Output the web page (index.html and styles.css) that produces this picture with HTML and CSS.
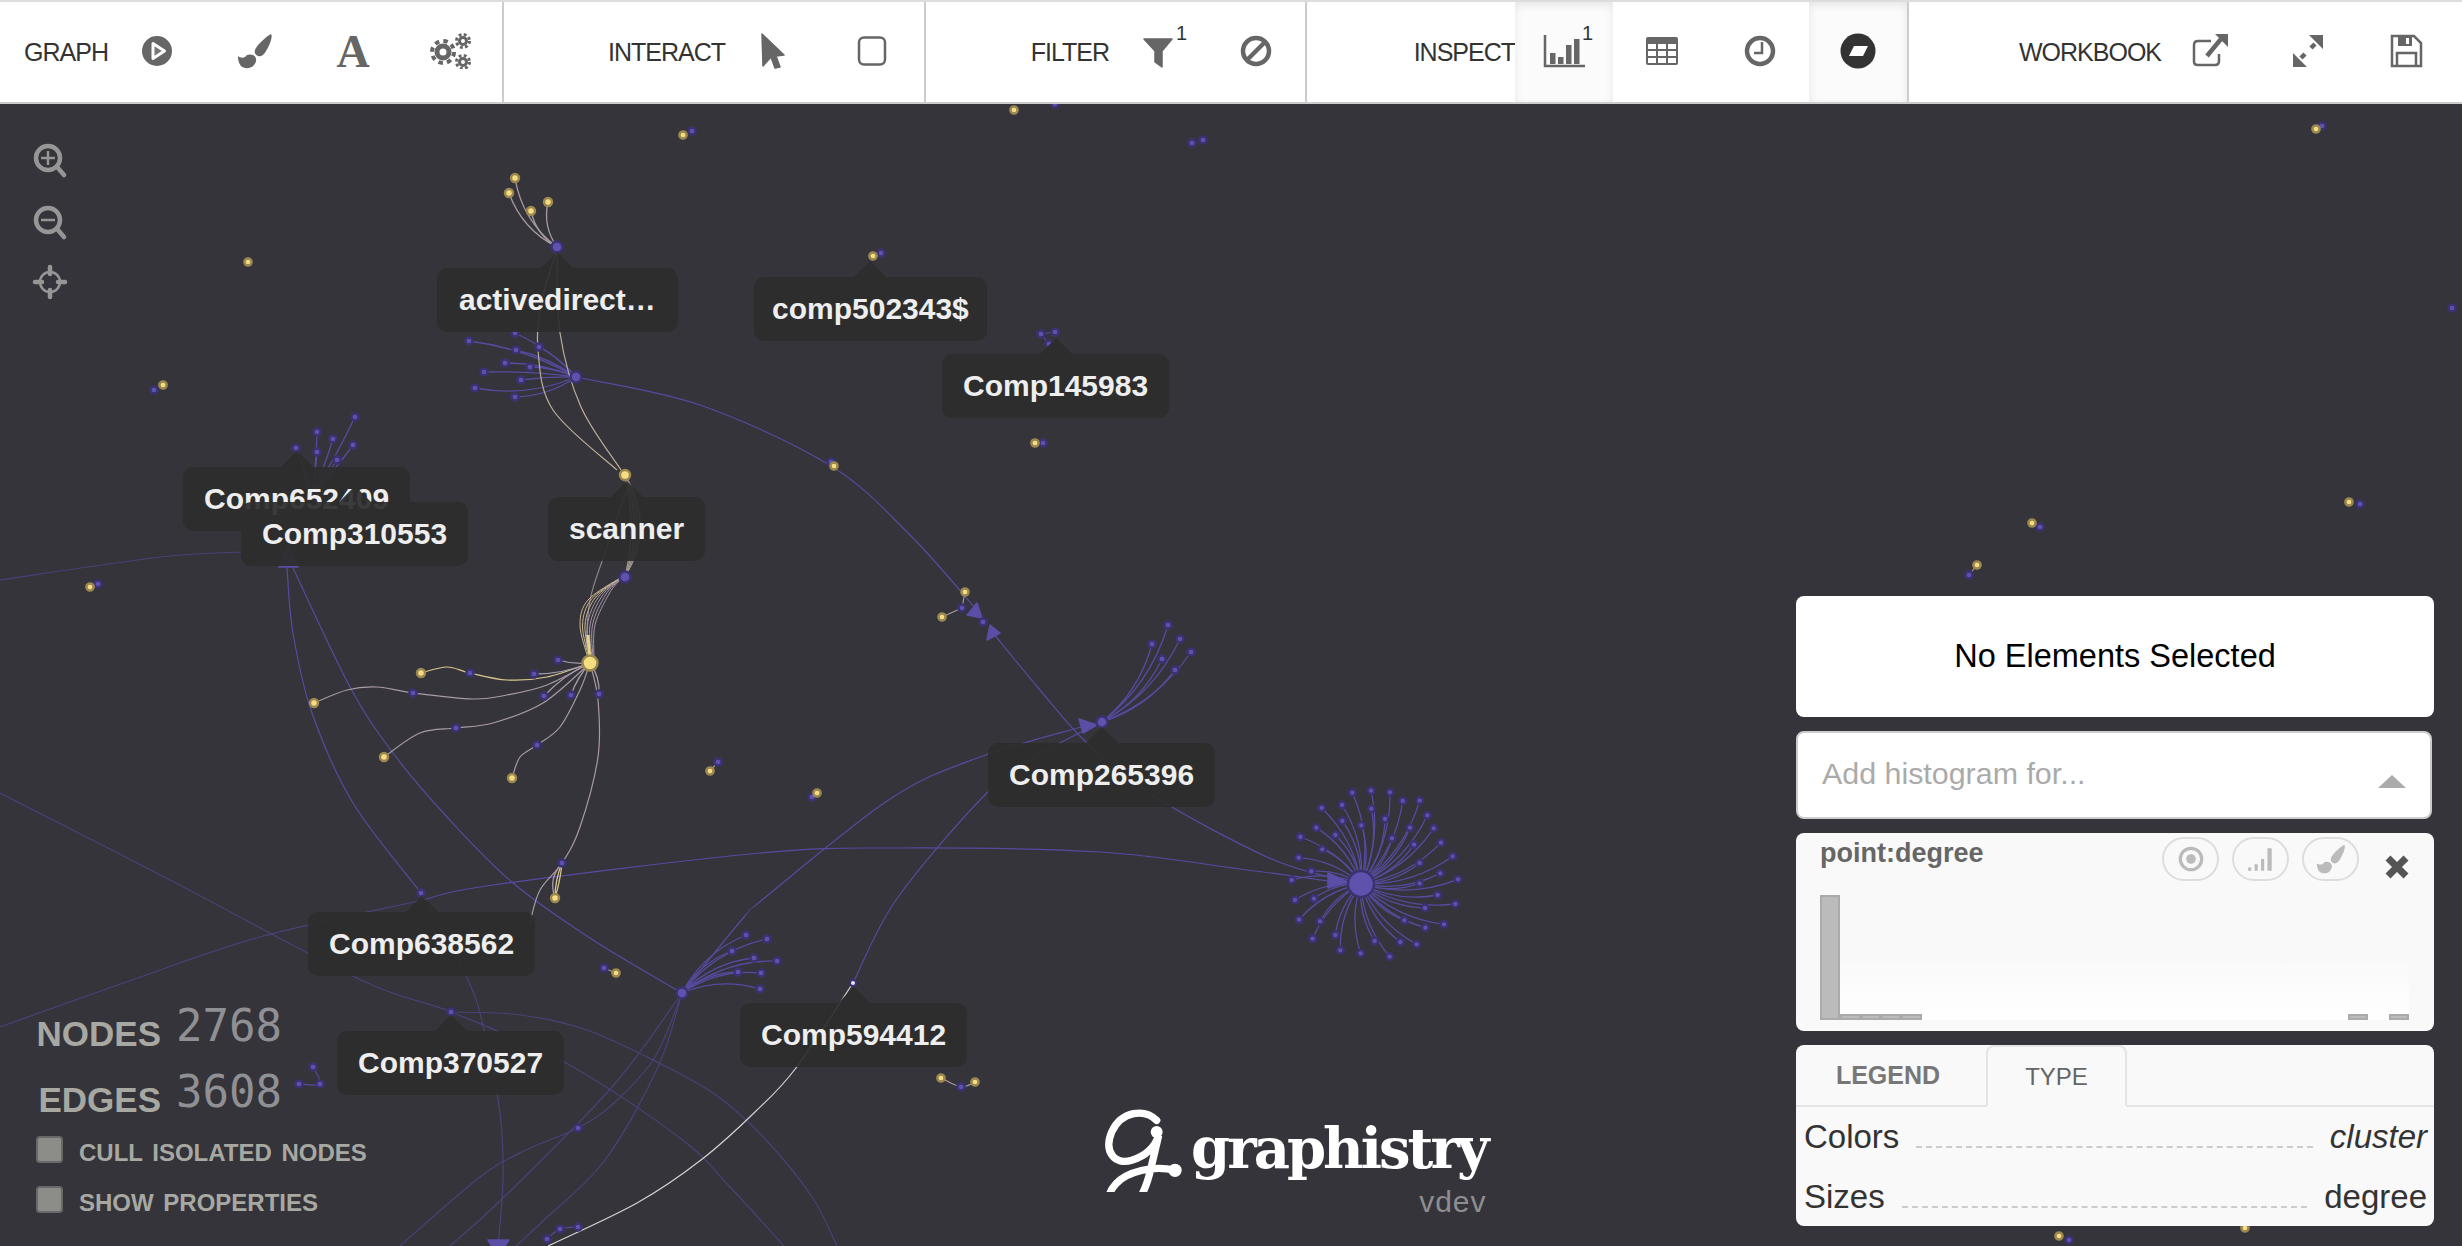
FILE: index.html
```html
<!DOCTYPE html>
<html lang="en">
<head>
    <meta charset="UTF-8">
    <title>Graphistry</title>
    <link rel="stylesheet" href="styles.css">
</head>
<body>
<div class="app">
    <div class="toolbar">
        <div class="group group-graph">
            <span class="group-label">GRAPH</span>
            <div class="btn"><svg class="icon" viewBox="0 0 36 36"><circle cx="18" cy="18" r="15"/><path class="cut" d="M14 10.500 L25.500 18 L14 25.500 Z"/></svg></div>
            <div class="btn"><svg class="icon" viewBox="0 0 36 36"><path d="M34 1 C36 3 33 12 29 18 C27 22 24 24 21 23 C17 21 17 18 19 15 C22 10 30 3 34 1 Z"/><path d="M16 22 C20 24 20 29 17 32 C14 36 7 36 4 33 C1 29 1 25 1 23 C3 25 6 25 8 24 C10 21 13 21 16 22 Z"/></svg></div>
            <div class="btn"><span class="font-icon">A</span></div>
            <div class="btn"><svg class="icon icon-gears" viewBox="0 0 50 36"><g class="gear-line"><circle cx="17" cy="19" r="6" stroke-width="5"/><circle cx="17" cy="19" r="11" stroke-width="4" stroke-dasharray="4.500 4.140"/><circle cx="37" cy="8" r="3.500" stroke-width="3"/><circle cx="37" cy="8" r="6.500" stroke-width="3" stroke-dasharray="2.800 2.300"/><circle cx="37" cy="29" r="3.500" stroke-width="3"/><circle cx="37" cy="29" r="6.500" stroke-width="3" stroke-dasharray="2.800 2.300"/></g></svg></div>
        </div>
        <div class="group group-interact">
            <span class="group-label">INTERACT</span>
            <div class="btn"><svg class="icon" viewBox="0 0 36 36"><path class="rounded" d="M6 1 L28 22 L20 23 L24 34 L19 35 L15 24 L7 33 Z"/></svg></div>
            <div class="btn"><svg class="icon" viewBox="0 0 36 36"><rect class="line" x="5" y="4.500" width="26" height="27" rx="5"/></svg></div>
        </div>
        <div class="group group-filter">
            <span class="group-label">FILTER</span>
            <div class="btn"><svg class="icon" viewBox="0 0 36 36"><path class="rounded" d="M4 6 H32 L22 18 V34 L15 29 V18 Z"/></svg><span class="badge">1</span></div>
            <div class="btn"><svg class="icon" viewBox="0 0 36 36"><circle class="line thick" cx="18" cy="18" r="13"/><path class="line thick" d="M9 27 L27 9"/></svg></div>
        </div>
        <div class="group group-inspect">
            <span class="group-label">INSPECT</span>
            <div class="btn btn-active"><svg class="icon icon-wide" viewBox="0 0 42 36"><path class="line" d="M2 2 V33 H42"/><rect x="7" y="20" width="5.500" height="11"/><rect x="15" y="24" width="5.500" height="7"/><rect x="23" y="12" width="5.500" height="19"/><rect x="31" y="6" width="5.500" height="25"/></svg><span class="badge">1</span></div>
            <div class="btn"><svg class="icon" viewBox="0 0 36 36"><rect x="2" y="4" width="32" height="28" rx="2"/><path class="cut-fill" d="M4 11 H12 V16 H4 Z M14 11 H22 V16 H14 Z M24 11 H32 V16 H24 Z M4 18 H12 V23 H4 Z M14 18 H22 V23 H14 Z M24 18 H32 V23 H24 Z M4 25 H12 V30 H4 Z M14 25 H22 V30 H14 Z M24 25 H32 V30 H24 Z"/></svg></div>
            <div class="btn"><svg class="icon" viewBox="0 0 36 36"><circle class="line thick" cx="18" cy="18" r="13"/><path class="line" d="M20 9 V20 H12"/></svg></div>
            <div class="btn btn-active"><svg class="icon icon-big" viewBox="0 0 36 36"><circle class="dark" cx="18" cy="18" r="17.500"/><path class="cut-fill" d="M14 13 H28 L23 23 H9 Z"/></svg></div>
        </div>
        <div class="group group-workbook">
            <span class="group-label">WORKBOOK</span>
            <div class="btn"><svg class="icon" viewBox="0 0 36 36"><path class="line" d="M19 8 H6 Q2 8 2 12 V29 Q2 32 6 32 H23 Q27 32 27 28 V21"/><path class="line thick" d="M15 23 L29 6"/><path d="M23 1 H36 V14 Z"/></svg></div>
            <div class="btn"><svg class="icon" viewBox="0 0 36 36"><path d="M19 2 H33 V16 Z M3 34 V20 L17 34 Z"/><path class="line thick" d="M11 25 L15 21 M21 15 L25 11"/></svg></div>
            <div class="btn"><svg class="icon" viewBox="0 0 36 36"><path class="line" d="M4 3 H26 L33 10 V33 H4 Z"/><path class="line" d="M9 33 V20 H28 V33"/><path d="M10 3 H24 V13 H10 Z"/><path class="cut-fill" d="M18 5 H21 V11 H18 Z"/></svg></div>
        </div>
    </div>

    <div class="canvas">
        <svg id="graph" class="graph" viewBox="0 104 2462 1142"></svg>

        <div class="tag tag-active">activedirect…</div>
        <div class="tag tag-comp502">comp502343$</div>
        <div class="tag tag-comp145">Comp145983</div>
        <div class="tag tag-comp652">Comp652409</div>
        <div class="tag tag-comp310">Comp310553</div>
        <div class="tag tag-scanner">scanner</div>
        <div class="tag tag-comp265">Comp265396</div>
        <div class="tag tag-comp638">Comp638562</div>
        <div class="tag tag-comp370">Comp370527</div>
        <div class="tag tag-comp594">Comp594412</div>

        <div class="zoom-tools">
            <svg class="zoom-icon" viewBox="0 0 44 44"><circle cx="20" cy="20" r="12"/><path d="M30 30 L36 37"/><path class="thin" d="M20 13 V27 M13 20 H27"/></svg>
            <svg class="zoom-icon" viewBox="0 0 44 44"><circle cx="20" cy="20" r="12"/><path d="M30 30 L36 37"/><path class="thin" d="M13 20 H27"/></svg>
            <svg class="zoom-icon" viewBox="0 0 44 44"><circle class="thin" cx="22" cy="20" r="10"/><path d="M22 5 V12 M22 28 V35 M7 20 H14 M30 20 H37"/></svg>
        </div>

        <div class="stats">
            <div class="stat-row"><span class="stat-name">NODES</span><span class="stat-value">2768</span></div>
            <div class="stat-row"><span class="stat-name">EDGES</span><span class="stat-value">3608</span></div>
            <div class="check-row check-first"><span class="check-box"></span><span class="check-label">CULL ISOLATED NODES</span></div>
            <div class="check-row"><span class="check-box"></span><span class="check-label">SHOW PROPERTIES</span></div>
        </div>

        <div class="logo">
            <svg class="logo-mark" viewBox="120 60 270 270">
                <path d="M290 115 C255 80 185 85 155 150 C130 210 165 250 215 235 C255 222 285 195 296 160 L272 262 C255 335 225 388 185 388 C142 388 135 340 168 305 C200 270 280 248 345 265"/>
                <circle cx="290" cy="150" r="18"/>
                <circle cx="345" cy="265" r="20"/>
            </svg>
            <div class="logo-text">
                <span class="logo-name">graphistry</span>
                <span class="logo-version">vdev</span>
            </div>
        </div>

        <div class="side">
            <div class="panel panel-selection">No Elements Selected</div>
            <div class="panel panel-add">
                <span class="add-text">Add histogram for...</span>
                <span class="caret"></span>
            </div>
            <div class="panel panel-hist">
                <div class="hist-head">
                    <span class="hist-title">point:degree</span>
                    <div class="hist-actions">
                        <span class="pill"><svg class="pill-icon" viewBox="0 0 28 28"><circle class="ring" cx="14" cy="14" r="10"/><circle cx="14" cy="14" r="4.500"/></svg></span>
                        <span class="pill"><svg class="pill-icon" viewBox="0 0 28 28"><path d="M2 22 H5 V25 H2 Z M8 19 H11 V25 H8 Z M14 14 H17 V25 H14 Z M20 4 H24 V25 H20 Z"/></svg></span>
                        <span class="pill"><svg class="pill-icon" viewBox="0 0 36 36"><path d="M34 1 C36 3 33 12 29 18 C27 22 24 24 21 23 C17 21 17 18 19 15 C22 10 30 3 34 1 Z"/><path d="M16 22 C20 24 20 29 17 32 C14 36 7 36 4 33 C1 29 1 25 1 23 C3 25 6 25 8 24 C10 21 13 21 16 22 Z"/></svg></span>
                        <svg class="hist-close" viewBox="0 0 26 26"><path d="M4 4 L22 22 M22 4 L4 22"/></svg>
                    </div>
                </div>
                <div class="hist-chart">
                    <span class="bar bar-tall"></span>
                    <span class="bar bar-low"></span>
                    <span class="bar bar-low"></span>
                    <span class="bar bar-low"></span>
                    <span class="bar bar-low"></span>
                    <span class="bar bar-low bin-27"></span>
                    <span class="bar bar-low bin-29"></span>
                </div>
            </div>
            <div class="panel panel-legend">
                <div class="tabs">
                    <span class="tab tab-legend">LEGEND</span>
                    <span class="tab tab-type">TYPE</span>
                </div>
                <div class="legend-row"><span>Colors</span><span class="dash"></span><em>cluster</em></div>
                <div class="legend-row"><span>Sizes</span><span class="dash"></span><span>degree</span></div>
            </div>
        </div>
    </div>
</div>
<script src="graph.js"></script>
</body>
</html>
```

FILE: styles.css
```css
body {
    margin: 0;
    overflow: hidden;
    font-family: "Liberation Sans", Arial, sans-serif;
    background-color: #34343a;
}

.app {
    display: flex;
    flex-direction: column;
    height: 100vh;
}

/* toolbar */
.toolbar {
    display: flex;
    flex: none;
    box-sizing: border-box;
    height: 104px;
    background-color: #ffffff;
    border-top: 2px solid #dddddd;
    border-bottom: 2px solid #cccccc;
}

.group {
    display: flex;
    justify-content: flex-end;
    align-items: center;
    box-sizing: border-box;
    border-right: 2px solid #cccccc;
}

.group-graph {
    width: 504px;
    padding-right: 2px;
}

.group-interact {
    width: 422px;
    padding-right: 3px;
}

.group-filter {
    width: 381px;
}

.group-inspect {
    width: 602px;
}

.group-workbook {
    flex: 1;
    border-right: none;
    padding-right: 7px;
}

.group-label {
    font-size: 25px;
    letter-spacing: -1px;
    color: #333333;
}

.btn {
    position: relative;
    display: flex;
    justify-content: center;
    align-items: center;
    flex: none;
    width: 98px;
    height: 100%;
}

.btn-active {
    background-color: #fbfbfb;
    box-shadow: inset 0 3px 8px rgba(0, 0, 0, .09);
}

.icon {
    width: 36px;
    height: 36px;
    fill: #666666;
    margin-bottom: 2px;
}

.icon-gears {
    width: 50px;
}

.icon-wide {
    width: 42px;
}

.icon .cut {
    fill: #777777;
    stroke: #ffffff;
    stroke-width: 3;
    stroke-linejoin: round;
}

.icon .cut-fill {
    fill: #ffffff;
}

.icon .dark {
    fill: #333333;
}

.icon .line {
    fill: none;
    stroke: #666666;
    stroke-width: 2.5;
}

.icon .thick {
    stroke-width: 4.5;
}

.icon .rounded {
    stroke: #666666;
    stroke-width: 1.500;
    stroke-linejoin: round;
}

.gear-line {
    fill: none;
    stroke: #666666;
}

.font-icon {
    font-family: "Liberation Serif", serif;
    font-size: 46px;
    font-weight: bold;
    line-height: 36px;
    color: #666666;
}

.badge {
    position: absolute;
    left: 67px;
    top: 21px;
    font-size: 20px;
    line-height: 20px;
    color: #333333;
}

/* graph area */
.canvas {
    position: relative;
    flex: 1;
    overflow: hidden;
}

.graph {
    position: absolute;
    top: 0;
    left: 0;
    width: 2462px;
    height: 1142px;
}

.tag {
    position: absolute;
    height: 64px;
    padding: 0 21px;
    border-radius: 10px;
    background-color: rgba(45, 45, 45, .93);
    color: #eeeeee;
    font-size: 30px;
    font-weight: bold;
    line-height: 64px;
    white-space: nowrap;
}

.tag::before {
    content: "";
    position: absolute;
    left: 50%;
    top: -16px;
    margin-left: -16px;
    border-left: 16px solid transparent;
    border-right: 16px solid transparent;
    border-bottom: 16px solid rgba(45, 45, 45, .93);
}

.tag-active { left: 437px; top: 164px; padding: 0 22px; }
.tag-comp502 { left: 754px; top: 173px; padding: 0 18px; }
.tag-comp145 { left: 942px; top: 250px; }
.tag-comp652 { left: 183px; top: 363px; }
.tag-comp310 { left: 241px; top: 398px; }
.tag-scanner { left: 548px; top: 393px; }
.tag-comp265 { left: 988px; top: 639px; }
.tag-comp638 { left: 308px; top: 808px; }
.tag-comp370 { left: 337px; top: 927px; }
.tag-comp594 { left: 740px; top: 899px; }

.zoom-tools {
    position: absolute;
    left: 28px;
    top: 34px;
    display: flex;
    flex-direction: column;
    gap: 18px;
}

.zoom-icon {
    width: 44px;
    height: 44px;
    fill: none;
    stroke: #969696;
    stroke-width: 4.500;
    stroke-linecap: round;
}

.zoom-icon .thin {
    stroke-width: 2.500;
    stroke-linecap: butt;
}

/* counters */
.stats {
    position: absolute;
    left: 36px;
    top: 881px;
}

.stat-row {
    display: flex;
    align-items: flex-end;
    height: 66px;
}

.stat-name {
    width: 125px;
    font-size: 35px;
    font-weight: bold;
    line-height: 34px;
    text-align: right;
    color: #a8a8a2;
}

.stat-value {
    margin-left: 15px;
    padding-bottom: 3px;
    font-family: "DejaVu Sans Mono", monospace;
    font-size: 44px;
    line-height: 44px;
    color: #909094;
}

.check-row {
    display: flex;
    align-items: center;
    height: 27px;
    margin-top: 23px;
}

.check-first {
    margin-top: 19px;
}

.check-box {
    box-sizing: border-box;
    width: 27px;
    height: 27px;
    border: 2px solid #69696a;
    border-radius: 4px;
    background-color: #8c8c88;
}

.check-label {
    margin-left: 16px;
    padding-top: 7px;
    font-size: 24px;
    font-weight: bold;
    word-spacing: 3px;
    color: #a8a8a2;
}

/* logo */
.logo {
    position: absolute;
    left: 1100px;
    top: 998px;
    display: flex;
}

.logo-mark {
    width: 90px;
    height: 90px;
    fill: none;
    stroke: #ffffff;
    stroke-width: 22;
    stroke-linecap: round;
}

.logo-mark circle {
    fill: #ffffff;
    stroke: none;
}

.logo-text {
    display: flex;
    flex-direction: column;
    align-items: flex-end;
    margin-left: 1px;
}

.logo-name {
    margin-top: 13px;
    font-family: "DejaVu Serif", serif;
    font-size: 56px;
    font-weight: bold;
    line-height: 66px;
    letter-spacing: -3px;
    color: #ffffff;
}

.logo-version {
    margin-top: 6px;
    font-size: 30px;
    line-height: 30px;
    letter-spacing: 1px;
    color: #8e8e90;
}

/* side panels */
.side {
    position: absolute;
    left: 1796px;
    top: 492px;
    display: flex;
    flex-direction: column;
    gap: 14px;
    width: 638px;
}

.panel {
    box-sizing: border-box;
    border-radius: 8px;
    background-color: #f9f9f9;
}

.panel-selection {
    height: 121px;
    background-color: #ffffff;
    color: #000000;
    font-size: 32.500px;
    line-height: 121px;
    text-align: center;
}

.panel-add {
    display: flex;
    justify-content: space-between;
    height: 88px;
    margin-right: 2px;
    padding: 0 24px;
    border: 2px solid #cccccc;
    background-color: #ffffff;
}

.add-text {
    color: #aaaaaa;
    font-size: 30.400px;
    line-height: 80px;
}

.caret {
    width: 0;
    height: 0;
    margin-top: 42px;
    border-left: 14px solid transparent;
    border-right: 14px solid transparent;
    border-bottom: 13px solid #aaaaaa;
}

.panel-hist {
    height: 198px;
}

.hist-head {
    display: flex;
    justify-content: space-between;
    padding: 4px 24px 0 24px;
}

.hist-title {
    color: #666666;
    font-size: 27px;
    font-weight: bold;
    line-height: 32px;
}

.hist-actions {
    display: flex;
    gap: 13px;
}

.pill {
    display: flex;
    justify-content: center;
    align-items: center;
    box-sizing: border-box;
    width: 57px;
    height: 44px;
    border: 2px solid #dddddd;
    border-radius: 22px;
}

.pill-icon {
    width: 30px;
    height: 30px;
    fill: #bbbbbb;
}

.pill-icon .ring {
    fill: none;
    stroke: #bbbbbb;
    stroke-width: 3;
}

.hist-close {
    width: 26px;
    height: 26px;
    margin: 17px 0 0 12px;
    fill: none;
    stroke: #555555;
    stroke-width: 7;
}

.hist-chart {
    display: grid;
    grid-template-columns: repeat(29, 1fr);
    align-items: end;
    height: 125px;
    margin: 14px 25px 0 24px;
    background: linear-gradient(rgba(255, 255, 255, 0) 50%, #ffffff);
}

.bar {
    box-sizing: border-box;
    border: 2px solid #aaaaaa;
    background-color: #bbbbbb;
}

.bar-tall {
    height: 125px;
}

.bar-low {
    height: 6px;
}

.bin-27 {
    grid-column: 27;
}

.bin-29 {
    grid-column: 29;
}

.panel-legend {
    height: 181px;
}

.tabs {
    display: flex;
    box-sizing: border-box;
    height: 62px;
    border-bottom: 2px solid #e4e4e4;
}

.tab {
    box-sizing: border-box;
    height: 62px;
    font-size: 25px;
    line-height: 60px;
    text-align: center;
}

.tab-legend {
    width: 184px;
    color: #777777;
    font-weight: bold;
}

.tab-type {
    width: 141px;
    margin-left: 6px;
    border: 2px solid #e4e4e4;
    border-bottom: 2px solid #f9f9f9;
    border-radius: 8px 8px 0 0;
    color: #666666;
    font-size: 24px;
}

.legend-row {
    display: flex;
    align-items: baseline;
    gap: 17px;
    padding: 0 7px 0 8px;
    color: #333333;
    font-size: 33px;
    line-height: 60px;
}

.dash {
    flex: 1;
    border-bottom: 2px dashed #cccccc;
}
```

FILE: graph.js
```js
// node and edge data are in page pixels, the svg viewBox lines up with the page
var PURPLE = '#564ba0', DIM = '#484279', YELLOW = '#d9c88e', MAUVE = '#a99aa3', WHITE = '#d4d4d4';
var out = [];

function smooth(p) {
    var d = 'M' + p[0] + ' ' + p[1];
    for (var i = 0; i < p.length - 2; i += 2) {
        var x0 = i > 0 ? p[i - 2] : p[i], y0 = i > 0 ? p[i - 1] : p[i + 1];
        var x1 = p[i], y1 = p[i + 1], x2 = p[i + 2], y2 = p[i + 3];
        var x3 = i + 4 < p.length ? p[i + 4] : x2, y3 = i + 4 < p.length ? p[i + 5] : y2;
        d += ' C' + (x1 + (x2 - x0) / 6) + ' ' + (y1 + (y2 - y0) / 6) + ' ' +
            (x2 - (x3 - x1) / 6) + ' ' + (y2 - (y3 - y1) / 6) + ' ' + x2 + ' ' + y2;
    }
    return d;
}

function edge(color, p, w) {
    out.push('<path d="' + smooth(p) + '" fill="none" stroke="' + color + '" stroke-width="' + (w || 1.2) + '"/>');
}

function fan(hub, p, curve, color) {
    for (var i = 0; i < p.length; i += 2) {
        var dx = p[i] - hub[0], dy = p[i + 1] - hub[1];
        var cx = hub[0] + dx * .5 - dy * curve, cy = hub[1] + dy * .5 + dx * curve;
        out.push('<path d="M' + hub[0] + ' ' + hub[1] + ' Q' + cx + ' ' + cy + ' ' + p[i] + ' ' + p[i + 1] +
            '" fill="none" stroke="' + (color || PURPLE) + '" stroke-width="1.3"/>');
    }
}

function arrow(p) {
    out.push('<polygon points="' + p + '" fill="#5a4ea6" stroke="#5a4ea6" stroke-width="1.5" stroke-linejoin="round"/>');
}

function dots(p, kind, r) {
    var fill = kind === 'y' ? '#f6dd82' : '#5f52ac', ring = kind === 'y' ? '#9a8850' : '#3b3272';
    for (var i = 0; i < p.length; i += 2) {
        out.push('<circle cx="' + p[i] + '" cy="' + p[i + 1] + '" r="' + (r || 3.6) + '" fill="' + fill + '" stroke="' + ring + '" stroke-width="2.5"/>');
    }
}

// long edges
edge(PURPLE, [576, 377, 700, 405, 831, 466, 910, 535, 975, 608]);
edge(PURPLE, [993, 633, 1040, 690, 1087, 743, 1157, 798, 1267, 857, 1332, 878]);
edge(PURPLE, [1335, 882, 1240, 869, 1100, 852, 900, 848, 760, 853, 493, 885, 423, 900]);
edge(DIM, [423, 900, 260, 937, 132, 980, 0, 1027]);
edge(DIM, [0, 580, 160, 557, 242, 552]);
edge(PURPLE, [287, 568, 293, 633, 312, 713, 353, 803, 421, 893]);
edge(PURPLE, [293, 568, 350, 687, 393, 753, 447, 817, 513, 883, 593, 940, 682, 993]);
edge(DIM, [421, 893, 468, 980, 484, 1030, 500, 1113, 503, 1180, 498, 1246]);
edge(DIM, [451, 1012, 521, 1015, 587, 1030, 659, 1063, 716, 1095, 766, 1140, 812, 1197, 837, 1246]);
edge(DIM, [0, 793, 170, 880, 361, 980, 451, 1012, 566, 1063, 680, 1138, 730, 1187, 784, 1246]);
edge(DIM, [682, 993, 655, 1057, 614, 1103, 578, 1128, 526, 1150, 480, 1177, 400, 1246]);
edge(DIM, [682, 993, 612, 1087, 501, 1200, 450, 1246]);
edge(DIM, [682, 993, 658, 1067, 605, 1160, 544, 1220, 516, 1246]);
edge(PURPLE, [682, 993, 744, 917, 762, 900, 890, 799, 980, 757, 1085, 726]);
edge(PURPLE, [853, 983, 896, 900, 980, 800, 1030, 760, 1085, 730]);
edge(WHITE, [853, 983, 796, 1068, 755, 1112, 701, 1160, 637, 1203, 548, 1246]);

// activedirect cluster
fan([557, 247], [515, 178, 509, 193], -.2, MAUVE);
fan([557, 247], [548, 202, 531, 211], -.22, MAUVE);
fan([576, 377], [469, 341, 515, 333, 516, 350, 539, 347, 505, 363, 530, 367], .1);
fan([576, 377], [484, 372, 521, 380], .04);
fan([576, 377], [475, 388, 515, 397], -.15);
edge('#bdaf98', [621, 470, 581, 407, 560, 333, 557, 250]);
edge('#bdaf98', [617, 470, 553, 410, 538, 350, 542, 300, 556, 253]);

// scanner cluster
fan([625, 475], [625, 577], -.3, '#a2968e');
fan([625, 475], [625, 577], -.24, '#a2968e');
fan([625, 475], [625, 577], -.18, '#a2968e');
fan([625, 475], [625, 577], -.12, '#a2968e');
edge('#8d8187', [628, 487, 606, 550, 590, 600, 586, 650]);
for (var k = 0; k < 7; k++) {
    edge(k < 3 ? '#c7b590' : '#a496a8', [588 + k, 658, 580 + k * 2.5, 625, 588 + k * 3.5, 600 - k, 620, 578 + k * .3], 1);
}
edge('#e6d28f', [590, 660, 588, 635], 3);
edge(YELLOW, [590, 663, 547, 677, 507, 680, 470, 673, 447, 667, 421, 673]);
edge(MAUVE, [590, 663, 547, 685, 507, 695, 473, 699, 413, 693, 377, 687, 347, 690, 314, 703]);
edge(MAUVE, [590, 663, 543, 703, 493, 723, 456, 728, 420, 733, 384, 757]);
edge(MAUVE, [590, 663, 580, 690, 560, 727, 537, 745, 520, 757, 512, 778]);
edge(MAUVE, [590, 663, 598, 700, 598, 757, 580, 827, 562, 863, 540, 890, 530, 922]);
fan([590, 663], [558, 660, 534, 674], -.1, '#a79bb0');
fan([590, 663], [544, 696, 571, 695], .1, '#a79bb0');
fan([590, 663], [599, 694], -.18, '#a79bb0');
fan([562, 863], [555, 898], .1, YELLOW);
fan([562, 863], [555, 898], -.05, YELLOW);
fan([562, 863], [555, 898], .3, MAUVE);

// fans
fan([312, 495], [355, 417, 317, 432, 333, 439, 353, 445, 317, 452, 296, 448, 337, 460], .03);
fan([682, 993], [746, 935, 767, 939, 732, 951, 754, 958, 777, 961, 738, 972, 761, 973, 760, 989], -.18);
fan([1102, 722], [1168, 625, 1152, 644, 1180, 639, 1162, 659, 1191, 652, 1175, 670], .16);
edge(PURPLE, [578, 1227, 560, 1229, 547, 1239]);

// small pairs
edge(MAUVE, [941, 1078, 961, 1087, 975, 1082]);
edge(MAUVE, [604, 968, 616, 973]);
edge(PURPLE, [313, 1067, 320, 1084, 299, 1084]);
edge(MAUVE, [962, 608, 965, 592]);
edge(MAUVE, [962, 608, 942, 617]);
edge(PURPLE, [1041, 334, 1055, 332]);
edge(PURPLE, [1041, 334, 1049, 344]);
edge(MAUVE, [710, 771, 718, 762]);
edge(MAUVE, [1977, 565, 1969, 575]);

// star
var star = [1361, 884];
var outer = [337, 98, 393, 92, 450, 97, 488, 123, 539, 122, 562, 166, 581, 205, 603, 248, 638, 289, 654, 358, 646, 432, 612, 493, 530, 553, 556, 503, 449, 590, 362, 580, 301, 571, 218, 536, 177, 479, 165, 420, 155, 360, 176, 293, 181, 231, 229, 203, 245, 144, 306, 135];
var inner = [394, 146, 435, 177, 510, 203, 456, 235, 522, 254, 539, 309, 601, 340, 539, 370, 593, 405, 555, 444, 493, 481, 481, 546, 404, 543, 286, 525, 240, 484, 222, 416, 214, 334, 247, 268, 286, 225, 307, 183, 364, 196];
var starNodes = outer.concat(inner).map(function (v, i) {
    return i % 2 ? 760 + v / 3 : 1240 + v / 3;
});
fan(star, starNodes, .17);

arrow('977,603 967,615 982,618');
arrow('987,640 1000,633 990,625');
arrow('1079,719 1083,733 1097,725');
arrow('1348,882 1328,873 1328,888');
arrow('288,545 279,567 298,567');
arrow('488,1240 509,1240 498,1256');

dots(starNodes, 'p', 3.4);
dots([557, 247, 576, 377, 682, 993, 1102, 722, 625, 577], 'p', 5.5);
dots([1361, 884], 'p', 13);
dots([469, 341, 515, 333, 516, 350, 539, 347, 505, 363, 530, 367, 484, 372, 521, 380, 475, 388, 515, 397], 'p');
dots([355, 417, 317, 432, 333, 439, 353, 445, 317, 452, 296, 448, 337, 460], 'p');
dots([746, 935, 767, 939, 732, 951, 754, 958, 777, 961, 738, 972, 761, 973, 760, 989], 'p');
dots([1168, 625, 1152, 644, 1180, 639, 1162, 659, 1191, 652, 1175, 670, 983, 622, 962, 608], 'p');
dots([558, 660, 534, 674, 544, 696, 571, 695, 599, 694, 470, 673, 413, 693, 456, 728, 537, 745, 562, 863, 421, 893, 451, 1012, 578, 1128, 547, 1239, 560, 1229, 578, 1227], 'p');
dots([1055, 104, 692, 131, 1192, 143, 1203, 140, 2322, 126, 154, 390, 881, 253, 1041, 334, 1055, 332, 1049, 344, 831, 462, 1043, 443, 98, 584, 2040, 527, 2360, 504, 1969, 575, 2452, 308, 718, 762, 812, 797, 2069, 1240, 961, 1087, 604, 968, 313, 1067, 299, 1084, 320, 1084], 'p');
dots([515, 178, 509, 193, 548, 202, 531, 211, 421, 673, 314, 703, 384, 757, 512, 778, 555, 898], 'y', 4);
dots([683, 135, 1014, 110, 2316, 129, 248, 262, 163, 385, 873, 256, 834, 466, 1035, 443, 90, 587, 2032, 523, 2349, 502, 1977, 565, 710, 771, 817, 793, 2245, 1228, 2059, 1236, 941, 1078, 975, 1082, 616, 973, 965, 592, 942, 617], 'y', 3.6);
dots([625, 475], 'y', 5);
dots([590, 663], 'y', 7.5);
out.push('<circle cx="853" cy="983" r="3" fill="#e8e4f5" stroke="#3b3272" stroke-width="2"/>');

document.getElementById('graph').innerHTML = out.join('');
```
